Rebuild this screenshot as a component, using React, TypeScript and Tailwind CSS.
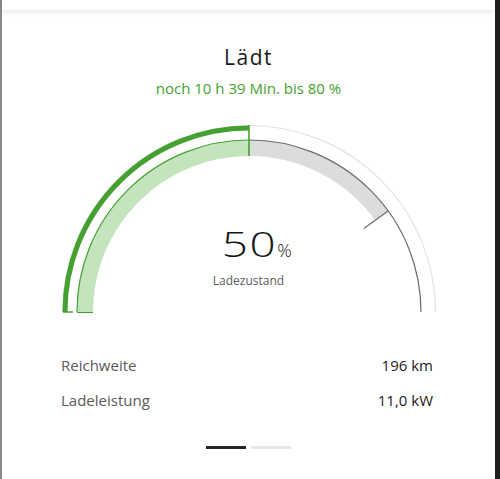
import React from "react";

const GREEN = "#44a12f";
const GREEN_LIGHT = "#c4e4bd";
const CX = 200;
const CY = 192;

function point(r: number, p: number) {
  const a = Math.PI * (1 - p);
  return [CX + r * Math.cos(a), CY - r * Math.sin(a)];
}

function arc(r: number, from: number, to: number) {
  const [x1, y1] = point(r, from);
  const [x2, y2] = point(r, to);
  return `M ${x1.toFixed(2)} ${y1.toFixed(2)} A ${r} ${r} 0 0 1 ${x2.toFixed(2)} ${y2.toFixed(2)}`;
}

function Gauge({ value, target }: { value: number; target: number }) {
  const [tx1, ty1] = point(142, target);
  const [tx2, ty2] = point(172, target);
  const [ex, ey1] = point(156, value);
  const [, ey2] = point(187, value);

  return (
    <div className="relative mx-auto w-[400px] h-[200px]">
      <svg width="400" height="200" viewBox="0 0 400 200" fill="none">
        {/* outer thin ring */}
        <path d={arc(186.5, 0, 1)} stroke="#e3e3e3" strokeWidth="1.2" />
        {/* outer progress */}
        <path d={arc(184, 0, value)} stroke={GREEN} strokeWidth="5" />
        {/* inner band */}
        <path d={arc(164, 0, value)} stroke={GREEN_LIGHT} strokeWidth="16" />
        <path d={arc(164, value, target)} stroke="#dcdcdc" strokeWidth="16" />
        <path d={arc(172, 0, value)} stroke={GREEN} strokeWidth="1.2" />
        <path d={arc(172, value, 1)} stroke="#6b6b6b" strokeWidth="1.2" />
        {/* end of progress */}
        <line x1={ex} y1={ey1} x2={ex} y2={ey2} stroke={GREEN} strokeWidth="1.6" />
        {/* target tick */}
        <line x1={tx1} y1={ty1} x2={tx2} y2={ty2} stroke="#6b6b6b" strokeWidth="1.2" />
        {/* foot lines */}
        <line x1="14" y1="192" x2="24" y2="192" stroke={GREEN} strokeWidth="1.5" />
        <line x1="28" y1="192.5" x2="44" y2="192.5" stroke={GREEN} strokeWidth="1" />
      </svg>
      <div className="absolute left-0 right-0 top-[104px] flex flex-col items-center">
        <div className="flex items-baseline pl-[17px] text-[#161616] font-light">
          <span className="inline-block mx-[7px] scale-x-[1.35] tracking-[1px] text-[34px] leading-[40px]">
            50
          </span>
          <span className="text-[18px] leading-[20px]">%</span>
        </div>
        <span className="mt-[9px] text-[12px] leading-[16px] text-[#5c5c5c]">Ladezustand</span>
      </div>
    </div>
  );
}

function Row({ label, value }: { label: string; value: string }) {
  return (
    <div className="flex items-center justify-between h-5 text-[15px]">
      <span className="text-[#5a5a5a]">{label}</span>
      <span className="text-[#222222]">{value}</span>
    </div>
  );
}

export default function App() {
  return (
    <div
      className="flex w-[500px] h-[479px] bg-white overflow-hidden"
      style={{ fontFamily: '"Open Sans", "Noto Sans", sans-serif' }}
    >
      <div className="w-[2px] bg-[#8a8a8a]" />
      <div className="flex-1 flex flex-col">
        <div className="h-[11px] bg-white shadow-[0_2px_6px_rgba(0,0,0,0.08)] border-b border-[#ececec]" />
        <div className="mt-[32px] text-center text-[21px] leading-[28px] tracking-[1.5px] text-[#1a1a1a]">
          Lädt
        </div>
        <div className="mt-[7px] text-center text-[15px] leading-[20px] text-[#44a12f]">
          noch 10 h 39 Min. bis 80 %
        </div>
        <div className="mt-[22px]">
          <Gauge value={0.5} target={0.8} />
        </div>
        <div className="mt-[35px] pl-[59px] pr-[62px] flex flex-col gap-[15px]">
          <Row label="Reichweite" value="196 km" />
          <Row label="Ladeleistung" value="11,0 kW" />
        </div>
        <div className="mt-[36px] flex justify-center gap-[5px]">
          <div className="w-[40px] h-[3px] bg-[#262626]" />
          <div className="w-[40px] h-[3px] bg-[#e6e6e6]" />
        </div>
      </div>
      <div className="w-[5px] bg-[#1e1e1e]" />
    </div>
  );
}
